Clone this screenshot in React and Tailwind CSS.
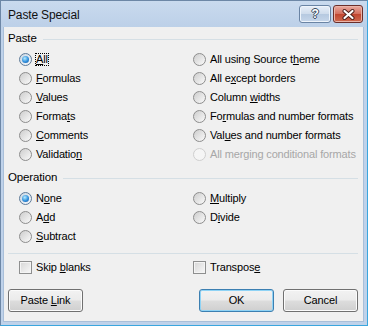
import React from "react"

const Radio = ({ checked, disabled }) => (
  <span
    className={`w-[13px] h-[13px] rounded-full border flex items-center justify-center shrink-0 ${
      disabled
        ? "border-[#cfcfcf] bg-[#f5f5f5]"
        : checked
        ? "border-[#5e7a98] bg-[linear-gradient(135deg,#c9d6e3,#f7f9fb)]"
        : "border-[#8d8d8d] bg-[linear-gradient(135deg,#cdcdcd,#fafafa)]"
    }`}
  >
    {checked && (
      <span className="w-[7px] h-[7px] rounded-full bg-[radial-gradient(circle_at_40%_35%,#b7ecff,#2f8fdc_55%,#154f9c)]" />
    )}
  </span>
)

const Check = () => (
  <span className="w-[13px] h-[13px] border border-[#8e8f8f] bg-[linear-gradient(135deg,#d6d6d6,#f8f8f8)] shadow-[inset_0_0_0_1px_#f4f4f4] shrink-0" />
)

const Option = ({ children, checked, disabled, focus }) => (
  <div className="h-[19px] flex items-center gap-[3px]">
    <Radio checked={checked} disabled={disabled} />
    <span
      className={`leading-[13px] px-px ${disabled ? "text-[#a7a7a7]" : "text-black"} ${
        focus ? "outline-1 outline-dotted outline-black -outline-offset-1" : ""
      }`}
    >
      {children}
    </span>
  </div>
)

const Group = ({ title }) => (
  <div className="h-[14px] flex items-center gap-[6px]">
    <span className="text-[#000] text-[11.5px]">{title}</span>
    <div className="flex-1 h-px bg-[#d5dfe5]" />
  </div>
)

const Button = ({ children, primary }) => (
  <button
    className={`w-[75px] h-[23px] rounded-[3px] border flex items-center justify-center text-black bg-[linear-gradient(#f2f2f2,#ebebeb_48%,#dddddd_52%,#cfcfcf)] ${
      primary
        ? "border-[#3c7fb1] shadow-[inset_0_0_0_1px_#8fd3f5]"
        : "border-[#707070] shadow-[inset_0_0_0_1px_#fbfbfb]"
    }`}
  >
    <span>{children}</span>
  </button>
)

const App = () => {
  return (
    <div className="w-[368px] h-[326px] flex flex-col bg-[#bfd2ea] border-l border-t border-[#6d87a6] border-r-[#3aa6de] border-b-[#3aa6de] border-r border-b font-['Liberation_Sans',Arial,sans-serif] text-[11px] tracking-[-0.15px] select-none">
      {/* Title bar */}
      <div className="h-[26px] flex items-start bg-[linear-gradient(#c9daee,#bcd0e8)]">
        <span className="pl-[7px] pt-[7px] text-[12px] text-[#111] leading-[14px]">Paste Special</span>
        <div className="ml-auto mt-[4px] mr-[4px] flex gap-[2px]">
          <div className="w-[32px] h-[18px] rounded-[3px] border border-[#6a84a4] bg-[linear-gradient(#e8eff8,#cfdcec_48%,#b6c9e0_52%,#c6d6ea)] shadow-[inset_0_0_0_1px_#eef4fb] flex items-center justify-center">
            <span className="text-white font-bold text-[12px] leading-[12px] [text-shadow:1px_0_#3a4a5e,-1px_0_#3a4a5e,0_1px_#3a4a5e,0_-1px_#3a4a5e]">?</span>
          </div>
          <div className="w-[30px] h-[18px] rounded-[3px] border border-[#6b2e2a] bg-[linear-gradient(#e9a99f,#d4705f_48%,#c14630_52%,#cf6a4f)] shadow-[inset_0_0_0_1px_#eab4a8] flex items-center justify-center">
            <svg width="13" height="11" viewBox="0 0 13 11">
              <path d="M2.5 2 L10.5 9 M10.5 2 L2.5 9" stroke="#4a1d18" strokeWidth="4" strokeLinecap="round" />
              <path d="M2.5 2 L10.5 9 M10.5 2 L2.5 9" stroke="#ffffff" strokeWidth="2.2" strokeLinecap="round" />
            </svg>
          </div>
        </div>
      </div>

      {/* Client area */}
      <div className="flex-1 ml-[2px] mr-[3px] mb-[3px] bg-[#f0f0f0] border border-[#a9bfd9] border-t-0 pl-[4px] pr-[5px] pt-[5px] flex flex-col">
        <Group title="Paste" />
        <div className="mt-[4px] ml-[11px] flex">
          <div className="w-[174px] flex flex-col">
            <Option checked focus><u>A</u>ll</Option>
            <Option><u>F</u>ormulas</Option>
            <Option><u>V</u>alues</Option>
            <Option>Forma<u>t</u>s</Option>
            <Option><u>C</u>omments</Option>
            <Option>Validatio<u>n</u></Option>
          </div>
          <div className="flex flex-col">
            <Option>All using Source t<u>h</u>eme</Option>
            <Option>All e<u>x</u>cept borders</Option>
            <Option>Column <u>w</u>idths</Option>
            <Option>Fo<u>r</u>mulas and number formats</Option>
            <Option>Val<u>u</u>es and number formats</Option>
            <Option disabled>All merging conditional formats</Option>
          </div>
        </div>

        <div className="mt-[7px]">
          <Group title="Operation" />
        </div>
        <div className="mt-[4px] ml-[11px] flex">
          <div className="w-[174px] flex flex-col">
            <Option checked>N<u>o</u>ne</Option>
            <Option>A<u>d</u>d</Option>
            <Option><u>S</u>ubtract</Option>
          </div>
          <div className="flex flex-col">
            <Option><u>M</u>ultiply</Option>
            <Option>D<u>i</u>vide</Option>
          </div>
        </div>

        <div className="mt-[7px] h-px bg-[#d5dfe5]" />

        <div className="mt-[4px] ml-[11px] flex">
          <div className="w-[174px] h-[19px] flex items-center gap-[3px]">
            <Check />
            <span className="px-px">Skip <u>b</u>lanks</span>
          </div>
          <div className="h-[19px] flex items-center gap-[3px]">
            <Check />
            <span className="px-px">Transpos<u>e</u></span>
          </div>
        </div>

        <div className="mt-[12px] flex items-center">
          <Button>Paste <u>L</u>ink</Button>
          <div className="ml-auto flex gap-[9px]">
            <Button primary>OK</Button>
            <Button>Cancel</Button>
          </div>
        </div>
      </div>
    </div>
  )
}

export default App
